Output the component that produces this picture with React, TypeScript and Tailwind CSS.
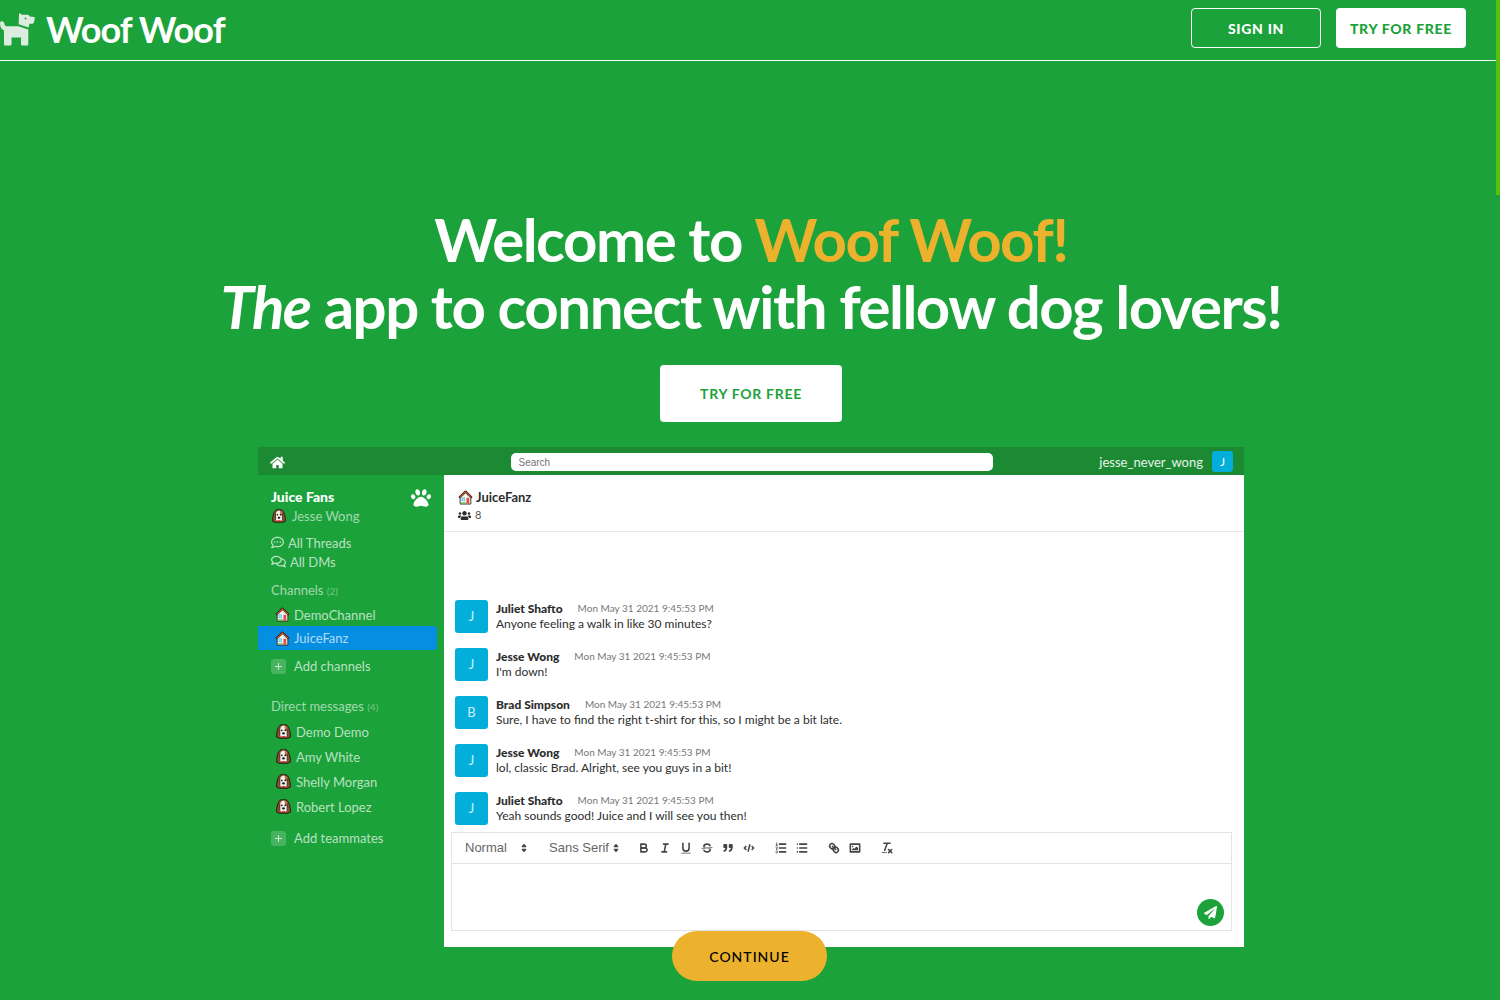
import React from "react";
import {
  FaHome,
  FaPaw,
  FaUsers,
  FaRegCommentDots,
  FaRegComments,
  FaPaperPlane,
} from "react-icons/fa";

const stamp = "Mon May 31 2021 9:45:53 PM";

const messages = [
  { name: "Juliet Shafto", text: "Anyone feeling a walk in like 30 minutes?" },
  { name: "Jesse Wong", text: "I'm down!" },
  { name: "Brad Simpson", text: "Sure, I have to find the right t-shirt for this, so I might be a bit late." },
  { name: "Jesse Wong", text: "lol, classic Brad. Alright, see you guys in a bit!" },
  { name: "Juliet Shafto", text: "Yeah sounds good! Juice and I will see you then!" },
];

const teammates = ["Demo Demo", "Amy White", "Shelly Morgan", "Robert Lopez"];

function DogLogo() {
  return (
    <svg viewBox="0 0 36 34" className="h-[34px] w-9 shrink-0 fill-[#dcecdf]" aria-hidden="true">
      <path d="M19 .8C19 .2 19.700 0 20.200.4L22 1.700h5.500c1 0 1.700.8 2.200 1.800l4.300.5c.6.100.9.500.8 1.100l-.6 3.400c-.3 1.500-1.200 2.300-2.700 2.300h-2l-1 3.700L18.700 11.300z" />
      <circle cx="25.500" cy="5.500" r=".9" fill="#1ba23a" />
      <path d="M0 10C0 8.800.8 8.200 1.800 8.200 3.300 8.200 4.300 9.300 4.500 11c.2 1.600.8 2.200 2.200 2.200h11.500L28.300 16.500V31c0 1-.5 1.500-1.300 1.500h-4.700c-.8 0-1.300-.5-1.300-1.500v-6.500H11.500V31c0 1-.5 1.500-1.300 1.500H5.300C4.500 32.500 4 32 4 31V17.500C1.500 16.500 0 14 0 10z" />
    </svg>
  );
}

function HouseEmoji() {
  return (
    <svg viewBox="0 0 16 16" className="size-[15px] shrink-0" aria-hidden="true">
      <path d="M2.300 7.500V15h11.400V7.500L8 2.500z" fill="#f4f4f2" stroke="#33241c" strokeWidth=".9" />
      <path d="M1.200 8.300 8 1.700l6.800 6.600" fill="none" stroke="#33211b" strokeWidth="2.400" strokeLinejoin="round" />
      <path d="M1.800 7.900 8 2l6.200 5.900" fill="none" stroke="#d0602f" strokeWidth="1.100" />
      <rect x="3.800" y="8" width="3.700" height="3.700" fill="#4fc6ee" />
      <path d="M5.650 8v3.700M3.800 9.850h3.700" stroke="#fff" strokeWidth=".4" />
      <rect x="9" y="8.300" width="3" height="6.300" fill="#e2513f" />
      <path d="M2.800 13.900h6" stroke="#63b04c" strokeWidth="1.300" />
    </svg>
  );
}

function DogEmoji({ size = "size-[15px]" }: { size?: string }) {
  return (
    <svg viewBox="0 0 16 16" className={`shrink-0 ${size}`} aria-hidden="true">
      <path d="M5 .9h6C13.800 2.500 15.400 8 15.300 14l-2.800 1.200h-9L.7 14C.6 8 2.200 2.500 5 .9z" fill="#8f5230" stroke="#1f120d" />
      <path d="M4.300 5.500C5 2.800 6.500 1.600 8 1.600s3.200 1.200 3.800 4L12 12c-1.300 2.200-6.700 2.200-8 0z" fill="#f6f2ee" />
      <path d="M9 1.800c2 .8 2.900 2.900 3 5.700L9.800 7z" fill="#b96f42" />
      <path d="M4.100 5v7.500M11.900 5v7.500" stroke="#2a1710" strokeWidth=".8" />
      <circle cx="6.200" cy="6.700" r=".9" fill="#17100e" />
      <circle cx="9.800" cy="6.700" r=".9" fill="#17100e" />
      <ellipse cx="8" cy="10" rx="1.500" ry="1.100" fill="#17100e" />
      <path d="M6.300 12.800h3.400L8 15.300z" fill="#e01e3c" />
    </svg>
  );
}

function PlusBox() {
  return (
    <span className="flex size-[15px] items-center justify-center rounded-[3px] bg-white/20">
      <svg viewBox="0 0 8 8" className="size-[7px] stroke-white/80" aria-hidden="true">
        <path d="M4 0v8M0 4h8" />
      </svg>
    </span>
  );
}

function ToolIcon({ label, children }: { label: string; children: React.ReactNode }) {
  return (
    <button type="button" aria-label={label} className="flex w-[21px] items-center justify-center">
      <svg viewBox="0 0 18 18" className="size-[14px] fill-none stroke-[#444] stroke-2 [stroke-linecap:round] [stroke-linejoin:round]">
        {children}
      </svg>
    </button>
  );
}

function Picker({ label, width }: { label: string; width: string }) {
  return (
    <button
      type="button"
      className={`flex items-center justify-between whitespace-nowrap font-['Liberation_Sans',sans-serif] text-[13px] leading-4 text-[#666] ${width}`}
    >
      {label}
      <svg viewBox="0 0 18 18" className="size-[14px] shrink-0 fill-[#444] stroke-[#444] stroke-2 [stroke-linejoin:round]" aria-hidden="true">
        <path d="M7 11 9 13 11 11zM7 7 9 5 11 7z" />
      </svg>
    </button>
  );
}

const solid = "fill-[#444] stroke-none";

function Toolbar() {
  return (
    <div className="flex h-[31px] items-center border-b border-[#e4e4e4] pl-[13px]">
      <Picker label="Normal" width="w-[66px]" />
      <div className="ml-[18px] mr-[11px]">
        <Picker label="Sans Serif" width="w-[73px]" />
      </div>
      <ToolIcon label="Bold">
        <path d="M5,4H9.500A2.500,2.500,0,0,1,12,6.500v0A2.500,2.500,0,0,1,9.500,9H5V4Z" />
        <path d="M5,9h5.500A2.500,2.500,0,0,1,13,11.500v0A2.500,2.500,0,0,1,10.500,14H5V9Z" />
      </ToolIcon>
      <ToolIcon label="Italic">
        <path d="M7 4h6M5 14h6M8 14 10 4" />
      </ToolIcon>
      <ToolIcon label="Underline">
        <path d="M5,3V9a4,4,0,0,0,4,4H9a4,4,0,0,0,4-4V3" />
        <rect className={solid} x="3" y="15" width="12" height="1" rx=".5" />
      </ToolIcon>
      <ToolIcon label="Strike">
        <path className="stroke-1" d="M15.500 8.500 2.500 9.500" />
        <path className={solid} d="M9.007,8C6.542,7.791,6,7.519,6,6.500,6,5.792,7.283,5,9,5c1.571,0,2.765.679,2.969,1.309a1,1,0,0,0,1.900-.617C13.356,4.106,11.354,3,9,3,6.200,3,4,4.538,4,6.500a3.200,3.200,0,0,0,.5,1.843Z" />
        <path className={solid} d="M8.984,10C11.457,10.208,12,10.479,12,11.500c0,0.708-1.283,1.500-3,1.500-1.571,0-2.765-.679-2.969-1.309a1,1,0,1,0-1.900.617C4.644,13.894,6.646,15,9,15c2.800,0,5-1.538,5-3.500a3.200,3.200,0,0,0-.5-1.843Z" />
      </ToolIcon>
      <ToolIcon label="Quote">
        <path className="fill-[#444]" d="M4 5h3v3H4zM11 5h3v3h-3z" />
        <path className="fill-[#444]" d="M7,8c0,4.031-3,5-3,5M14,8c0,4.031-3,5-3,5" />
      </ToolIcon>
      <ToolIcon label="Code">
        <path d="M5 7 3 9 5 11M13 7 15 9 13 11M10 5 8 13" />
      </ToolIcon>
      <span className="w-[11px]" />
      <ToolIcon label="Ordered list">
        <path d="M7 4h8M7 9h8M7 14h8" />
        <path className="stroke-1" d="M2.500 5.500h2M3.500 5.500v-3M4.500,10.500h-2c0-.234,1.850-1.076,1.850-2.234A0.959,0.959,0,0,0,2.500,8.156M2.500,14.846a0.959,0.959,0,0,0,1.850-.109A0.700,0.700,0,0,0,3.750,14a0.688,0.688,0,0,0,.6-0.736,0.959,0.959,0,0,0-1.850-.109" />
      </ToolIcon>
      <ToolIcon label="Bullet list">
        <path d="M6 4h9M6 9h9M6 14h9M3 4h0M3 9h0M3 14h0" />
      </ToolIcon>
      <span className="w-[11px]" />
      <ToolIcon label="Link">
        <path d="M7 7 11 11" />
        <path d="M8.900,4.577a3.476,3.476,0,0,1,.36,4.679A3.476,3.476,0,0,1,4.577,8.900C3.185,7.500,2.035,6.400,4.217,4.217S7.500,3.185,8.900,4.577Z" />
        <path d="M13.423,9.100a3.476,3.476,0,0,0-4.679-.36,3.476,3.476,0,0,0,.36,4.679c1.392,1.392,2.500,2.542,4.679.36S14.815,10.500,13.423,9.100Z" />
      </ToolIcon>
      <ToolIcon label="Image">
        <rect x="3" y="4" width="12" height="10" />
        <circle className={solid} cx="6" cy="7" r="1" />
        <path className={solid} d="M5 12V11L7 9 8 10 11 7 13 9V12z" />
      </ToolIcon>
      <span className="w-[11px]" />
      <ToolIcon label="Clear formatting">
        <path d="M5 3h8M6 12 9.350 3M11 11 15 15M15 11 11 15" />
        <rect className={solid} x="2" y="14" width="7" height="1" rx=".5" />
      </ToolIcon>
    </div>
  );
}

function Sidebar() {
  return (
    <aside className="w-[186px] shrink-0 pr-[7px] pt-3 text-[13px] leading-5 text-white/70">
      <div className="flex h-[19px] items-center justify-between pl-[13px] pr-[6px]">
        <h2 className="text-sm font-black text-white">Juice Fans</h2>
        <FaPaw className="mt-0.5 size-5 text-white" />
      </div>
      <div className="flex h-5 items-center gap-[6px] pl-[14px] text-white/60">
        <DogEmoji size="size-[14px]" />
        Jesse Wong
      </div>
      <div className="mt-[7px] flex h-[19px] items-center gap-1 pl-[13px]">
        <FaRegCommentDots className="size-[13px]" />
        All Threads
      </div>
      <div className="flex h-[19px] items-center gap-1 pl-[13px]">
        <FaRegComments className="size-[15px]" />
        All DMs
      </div>
      <div className="mt-[9px] pl-[13px] text-white/60">
        Channels <span className="text-[10px] text-white/40">(2)</span>
      </div>
      <div className="mt-0.5 flex h-[23px] items-center gap-1 pl-[17px]">
        <HouseEmoji />
        DemoChannel
      </div>
      <div className="flex h-6 items-center gap-1 rounded-r-[3px] bg-[#058ee2] pl-[17px]">
        <HouseEmoji />
        JuiceFanz
      </div>
      <button type="button" className="mt-[6px] flex items-center gap-2 pl-[13px]">
        <PlusBox />
        Add channels
      </button>
      <div className="mt-5 pl-[13px] text-white/60">
        Direct messages <span className="text-[10px] text-white/40">(4)</span>
      </div>
      <ul className="mt-0.5">
        {teammates.map((name) => (
          <li key={name} className="flex h-[25px] items-center gap-[5px] pl-[18px]">
            <DogEmoji />
            {name}
          </li>
        ))}
      </ul>
      <button type="button" className="mt-[9px] flex items-center gap-2 pl-[13px]">
        <PlusBox />
        Add teammates
      </button>
    </aside>
  );
}

function ChatPreview() {
  return (
    <section className="mx-auto mt-[25px] w-full max-w-[986px]" aria-label="App preview">
      <div className="flex h-7 items-center bg-[#1b8a33] px-[11px]">
        <div className="flex-1 pl-px">
          <FaHome className="mt-0.5 size-[15px] text-white" />
        </div>
        <input
          aria-label="Search"
          placeholder="Search"
          className="mt-[2px] h-[18px] w-[482px] rounded-[5px] bg-white px-2 font-['Liberation_Sans',sans-serif] text-[10px] placeholder:text-[#757575]"
        />
        <div className="flex flex-1 items-center justify-end gap-[9px] text-[13px] text-white/90">
          <span className="pt-[3px]">jesse_never_wong</span>
          <span className="flex size-[21px] items-center justify-center rounded-[3px] bg-[#03aedb] pt-0.5 text-xs text-white">J</span>
        </div>
      </div>
      <div className="flex min-h-[472px]">
        <Sidebar />
        <div className="flex min-w-0 flex-1 flex-col bg-white text-[#2d2d2d]">
          <div className="h-[57px] border-b border-[#e8e8e8] px-[14px] pt-[13px]">
            <h3 className="flex items-center gap-[3px] text-[13px] font-bold leading-[19px]">
              <HouseEmoji />
              JuiceFanz
            </h3>
            <div className="flex items-center gap-1 text-[11px] leading-4 text-[#555]">
              <FaUsers className="size-[13px] text-[#2d2d2d]" />
              8
            </div>
          </div>
          <ul className="flex flex-1 flex-col justify-end gap-[15px] pl-[11px]">
            {messages.map((m, i) => (
              <li key={i} className="flex h-[33px] gap-2">
                <span className="flex size-[33px] items-center justify-center rounded-[3px] bg-[#03aedb] text-[13px] text-white/80">
                  {m.name[0]}
                </span>
                <div className="pt-px text-xs leading-[15px]">
                  <div className="flex gap-[15px]">
                    <strong className="font-black">{m.name}</strong>
                    <span className="text-[10px] text-[#777]">{stamp}</span>
                  </div>
                  <p>{m.text}</p>
                </div>
              </li>
            ))}
          </ul>
          <div className="mb-4 ml-[7px] mr-3 mt-[7px] border border-[#e4e4e4]">
            <Toolbar />
            <div className="flex h-[66px] items-end justify-end">
              <textarea aria-label="Message" className="h-full flex-1 resize-none outline-none" />
              <button
                type="button"
                aria-label="Send"
                className="mb-1 mr-[7px] flex size-[27px] items-center justify-center rounded-full bg-[#1ba23a] text-white"
              >
                <FaPaperPlane className="size-[13px]" />
              </button>
            </div>
          </div>
        </div>
      </div>
    </section>
  );
}

export default function App() {
  return (
    <div className="relative min-h-screen overflow-hidden bg-[#1ba23a] font-['Lato',sans-serif] text-white">
      <header className="flex h-[61px] items-start justify-between border-b border-white pr-[34px]">
        <a href="#" className="flex h-[60px] items-center gap-[10px] text-4xl font-bold tracking-tight">
          <DogLogo />
          <span className="pb-[3px]">Woof Woof</span>
        </a>
        <nav className="mt-2 flex gap-[15px] text-sm font-black tracking-wider">
          <button type="button" className="h-10 w-[130px] rounded border border-white pt-0.5">
            SIGN IN
          </button>
          <button type="button" className="h-10 w-[130px] rounded bg-white pt-0.5 text-[#1ba23a]">
            TRY FOR FREE
          </button>
        </nav>
      </header>
      <main className="flex flex-col items-center pl-0.5 pt-[145px]">
        <h1 className="text-center text-6xl font-bold leading-[67px] tracking-tight">
          Welcome to <span className="text-[#ecb22e]">Woof Woof!</span>
          <br />
          <em>The</em> app to connect with fellow dog lovers!
        </h1>
        <button type="button" className="mt-[25px] h-[57px] w-[182px] rounded bg-white text-sm font-bold tracking-wider text-[#1ba23a]">
          TRY FOR FREE
        </button>
        <ChatPreview />
        <button
          type="button"
          className="relative -mt-4 mr-[3px] h-[50px] w-[155px] rounded-full bg-[#ecb22e] pt-0.5 text-sm font-medium tracking-[1px] text-black"
        >
          CONTINUE
        </button>
      </main>
      <div className="absolute right-0 top-0 h-[195px] w-1 bg-[#5bc20c]" aria-hidden="true" />
    </div>
  );
}
